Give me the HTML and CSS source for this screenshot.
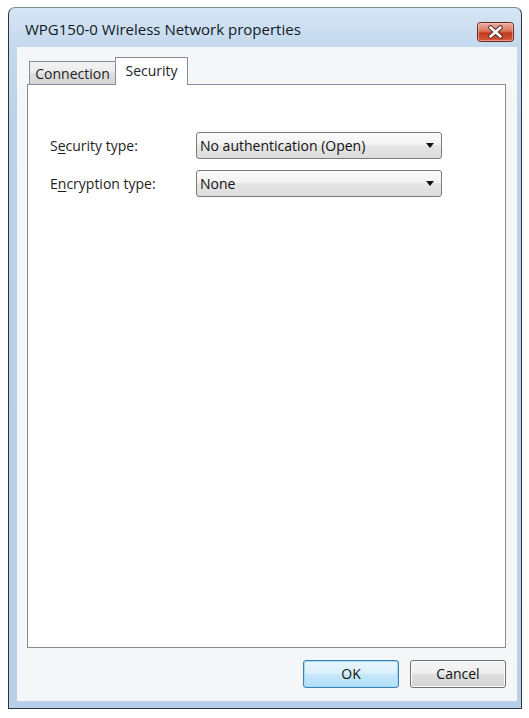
FILE: index.html
```html
<!DOCTYPE html>
<html>
<head>
<meta charset="utf-8">
<link rel="stylesheet" href="styles.css">
</head>
<body>
<div class="screen">
  <div class="window">
    <div class="titlebar">
      <span class="title">WPG150-0 Wireless Network properties</span>
      <div class="close">
        <svg width="37" height="20" viewBox="0 0 37 20">
          <defs>
            <linearGradient id="cg" x1="0" y1="0" x2="0" y2="1">
              <stop offset="0" stop-color="#eab3a5"/>
              <stop offset="0.45" stop-color="#d8765d"/>
              <stop offset="0.55" stop-color="#c23a1f"/>
              <stop offset="1" stop-color="#d65c3d"/>
            </linearGradient>
          </defs>
          <rect x="0.5" y="0.5" width="36" height="19" rx="3" fill="url(#cg)" stroke="#6a2a20"/>
          <rect x="1.5" y="1.5" width="34" height="17" rx="2" fill="none" stroke="#f3c6b8" stroke-opacity="0.6"/>
          <path d="M13.5 5.5 L23.5 14.5 M23.5 5.5 L13.5 14.5" stroke="#5a2a22" stroke-width="4.6" stroke-linecap="round"/>
          <path d="M13.5 5.5 L23.5 14.5 M23.5 5.5 L13.5 14.5" stroke="#ffffff" stroke-width="2.6" stroke-linecap="round"/>
        </svg>
      </div>
    </div>
    <div class="client">
      <div class="tabs">
        <div class="tab">Connection</div>
        <div class="tab active">Security</div>
      </div>
      <div class="panel">
        <div class="form">
          <label class="label">S<u>e</u>curity type:</label>
          <div class="combo"><span>No authentication (Open)</span><span class="arrow"></span></div>
          <label class="label">E<u>n</u>cryption type:</label>
          <div class="combo"><span>None</span><span class="arrow"></span></div>
        </div>
      </div>
      <div class="buttons">
        <div class="btn default">OK</div>
        <div class="btn">Cancel</div>
      </div>
    </div>
  </div>
</div>
</body>
</html>
```

FILE: styles.css
```css
html, body {
  margin: 0;
  padding: 0;
  background: #ffffff;
}
body {
  font-family: "Open Sans", "Noto Sans", sans-serif;
  font-size: 14px;
  color: #1e1e1e;
}
.screen {
  padding: 7px 0 0 8px;
}
.window {
  width: 514px;
  height: 702px;
  box-sizing: border-box;
  border: 1px solid #2f3438;
  border-top-color: #7f8b97;
  border-radius: 7px 7px 0 0;
  background: linear-gradient(180deg, #d6e5f4 0px, #c4d9ee 38px, #b9d1ea 120px, #b7cfe8 100%);
  padding: 0 4px 7px 8px;
  display: flex;
  flex-direction: column;
}
.titlebar {
  height: 39px;
  display: flex;
  justify-content: space-between;
  align-items: flex-start;
}
.title {
  padding: 11px 0 0 8px;
  font-size: 15px;
  line-height: 20px;
  color: #0f1a24;
}
.close {
  margin: 14px 3px 0 0;
  width: 37px;
  height: 20px;
}
.close svg {
  display: block;
}
.client {
  flex: 1;
  background: #f5f6f8;
  padding: 10px 11px 13px 10px;
  display: flex;
  flex-direction: column;
}
.tabs {
  height: 27px;
  display: flex;
  align-items: flex-end;
  position: relative;
  z-index: 1;
  padding-left: 2px;
}
.tab {
  box-sizing: border-box;
  width: 87px;
  height: 23px;
  border: 1px solid #898c95;
  border-bottom: none;
  background: linear-gradient(180deg, #f2f2f2, #ebebeb 50%, #dedede 50%, #d6d6d6);
  text-align: center;
  line-height: 21px;
  padding-top: 1px;
  color: #1e1e1e;
}
.tab.active {
  width: 73px;
  height: 28px;
  margin-left: -1px;
  margin-bottom: -1px;
  background: #ffffff;
  line-height: 20px;
  padding-top: 3px;
}
.panel {
  flex: 1;
  background: #ffffff;
  border: 1px solid #898c95;
  padding: 47px 0 0 22px;
}
.form {
  display: grid;
  grid-template-columns: 146px 246px;
  grid-auto-rows: 27px;
  row-gap: 11px;
  align-items: center;
}
.label u {
  text-decoration-thickness: 1px;
  text-underline-offset: 2px;
}
.combo {
  box-sizing: border-box;
  height: 27px;
  border: 1px solid #7a7a7a;
  border-radius: 3px;
  background: linear-gradient(180deg, #fbfbfb, #f1f1f1 50%, #e6e6e6 50%, #dcdcdc);
  display: flex;
  align-items: center;
  justify-content: space-between;
  padding: 0 7px 0 3px;
  color: #111;
}
.arrow {
  width: 0;
  height: 0;
  border-left: 4px solid transparent;
  border-right: 4px solid transparent;
  border-top: 5px solid #111;
}
.buttons {
  margin-top: 12px;
  display: flex;
  justify-content: flex-end;
  gap: 11px;
}
.btn {
  box-sizing: border-box;
  width: 96px;
  height: 28px;
  border: 1px solid #707070;
  border-radius: 3px;
  background: linear-gradient(180deg, #f5f5f5, #ededed 50%, #dfdfdf 50%, #d3d3d3);
  box-shadow: inset 0 0 0 1px #fcfcfc;
  text-align: center;
  line-height: 26px;
  color: #111;
}
.btn.default {
  border-color: #3c7fb1;
  background: linear-gradient(180deg, #eaf6fd, #d9f0fc 50%, #c6e8fb 50%, #b2def7);
  box-shadow: inset 0 0 0 1px #9fdcf8;
}
```
